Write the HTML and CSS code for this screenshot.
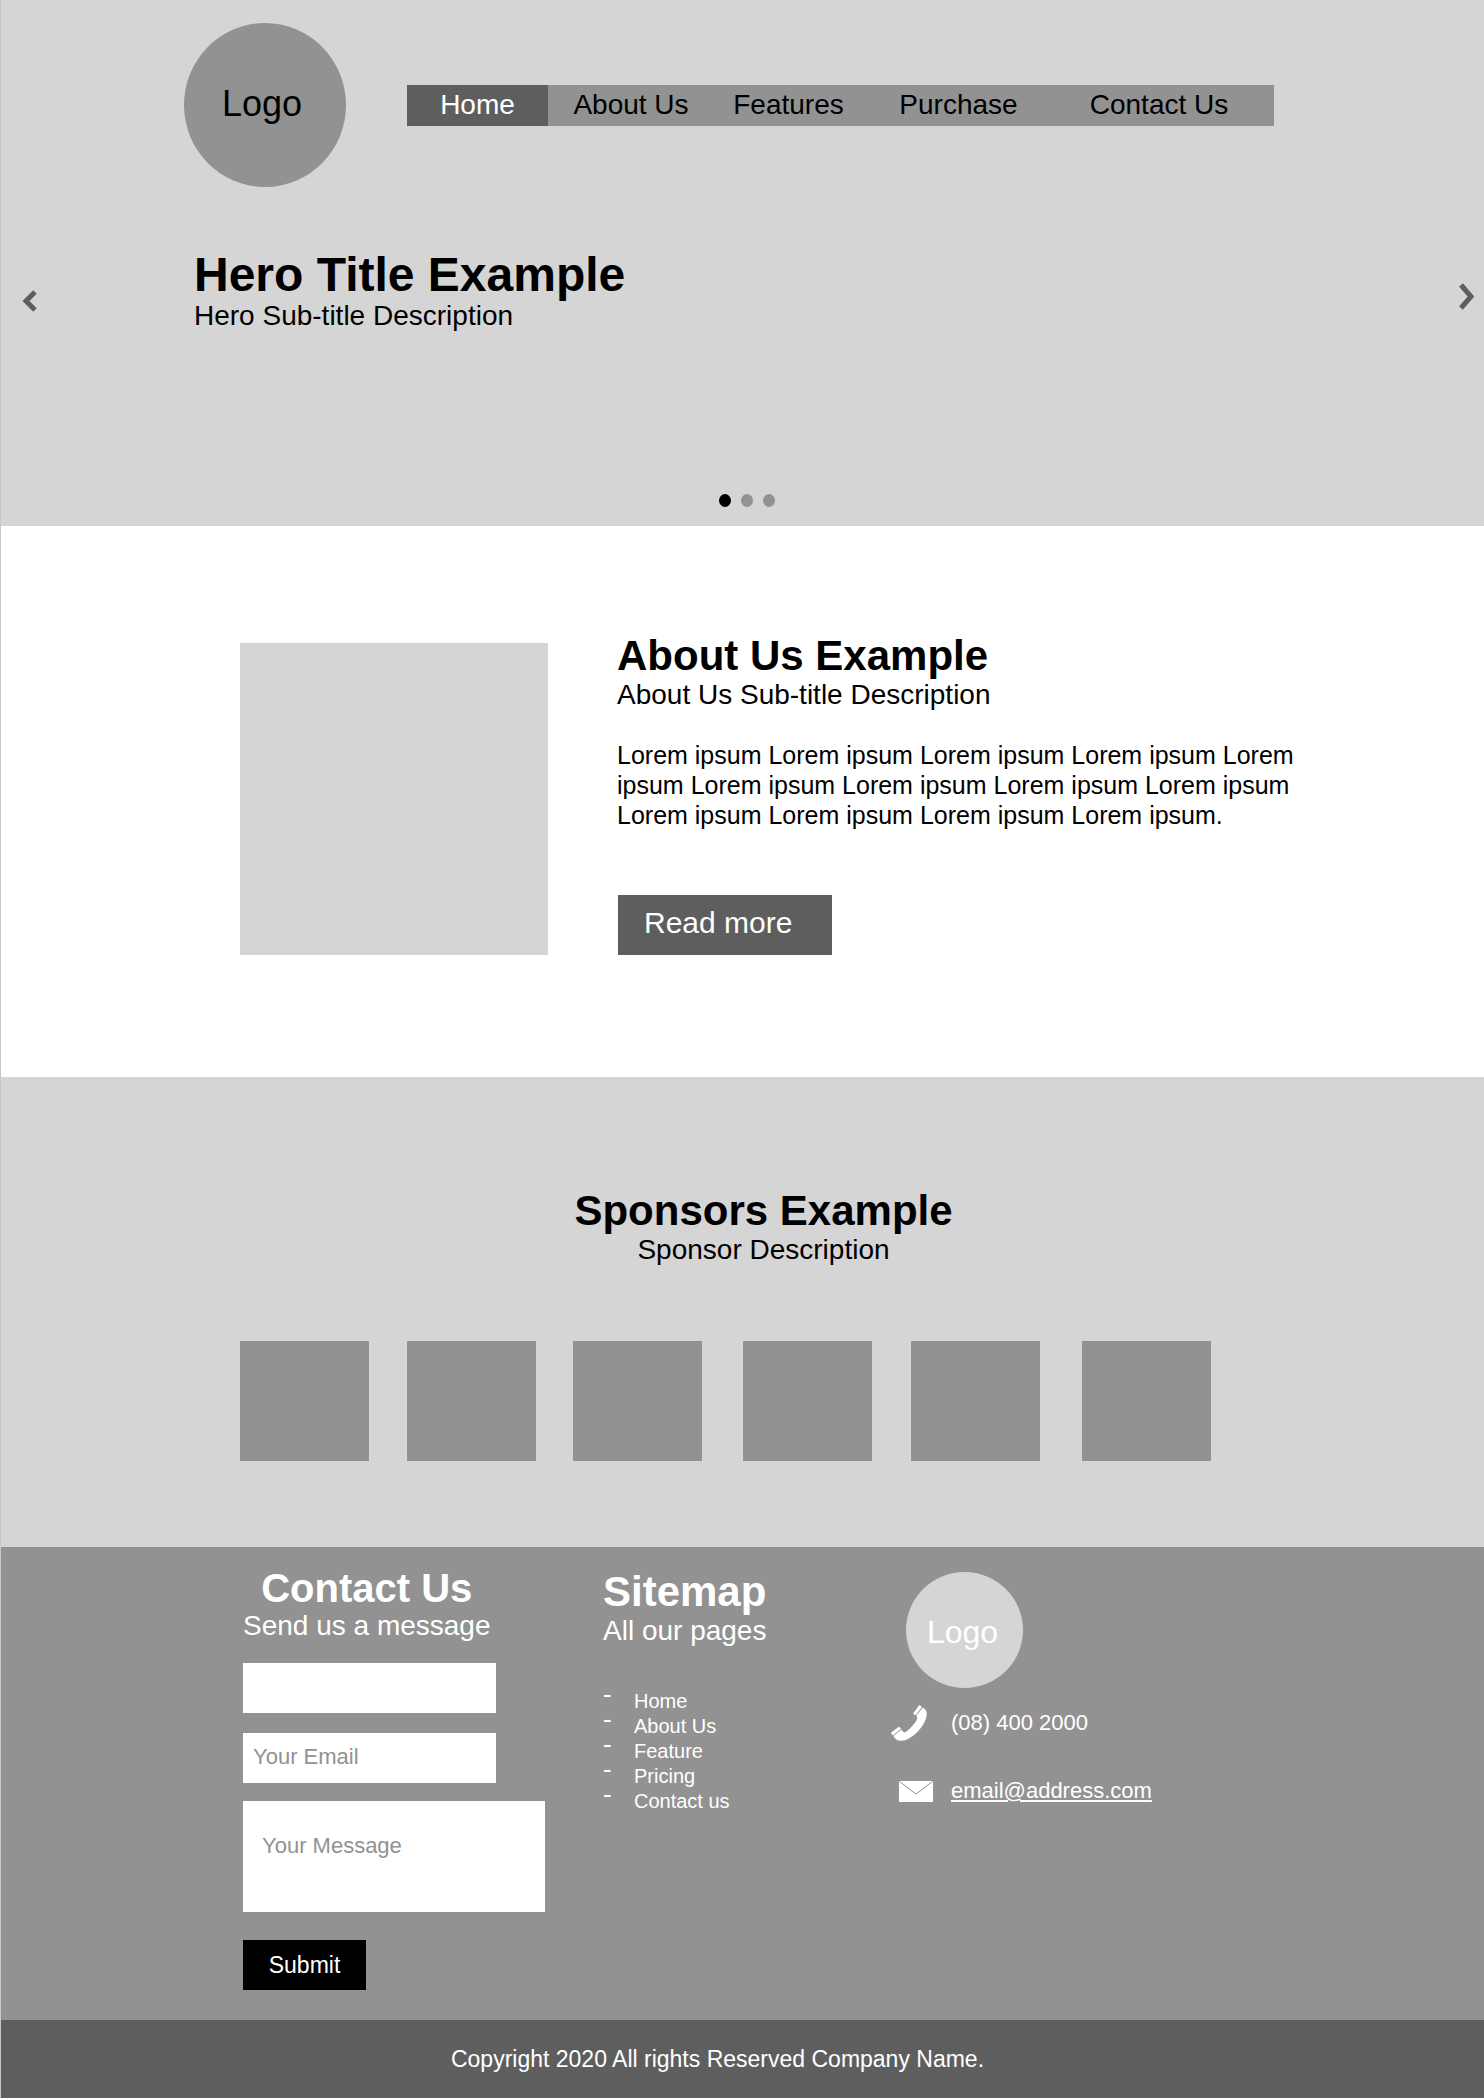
FILE: index.html
```html
<!DOCTYPE html>
<html lang="en">
<head>
<meta charset="utf-8">
<meta name="viewport" content="width=device-width, initial-scale=1">
<title>Company Name</title>
<link rel="stylesheet" href="styles.css">
</head>
<body>
<div class="top" id="home">
  <header class="header">
    <a class="logo" href="#home">Logo</a>
    <nav class="nav" aria-label="Main">
      <a class="nav-link nav-link-active" href="#home" aria-current="page">Home</a>
      <a class="nav-link" href="#about">About Us</a>
      <a class="nav-link" href="#features">Features</a>
      <a class="nav-link" href="#purchase">Purchase</a>
      <a class="nav-link" href="#contact">Contact Us</a>
    </nav>
  </header>
  <section class="hero">
    <button class="arrow" type="button" aria-label="Previous slide">
      <svg width="18" height="30" viewBox="0 0 18 30" aria-hidden="true"><path d="M14 10 5 19l9 9" fill="none" stroke="#5e5e5e" stroke-width="5"/></svg>
    </button>
    <div class="hero-text">
      <h1 class="hero-title">Hero Title Example</h1>
      <p class="subtitle">Hero Sub-title Description</p>
    </div>
    <button class="arrow" type="button" aria-label="Next slide">
      <svg width="18" height="30" viewBox="0 0 18 30" aria-hidden="true"><path d="M3 3l10 11.500L3 26" fill="none" stroke="#5e5e5e" stroke-width="5"/></svg>
    </button>
  </section>
  <div class="dots">
    <button class="dot dot-active" type="button" aria-label="Slide 1"></button>
    <button class="dot" type="button" aria-label="Slide 2"></button>
    <button class="dot" type="button" aria-label="Slide 3"></button>
  </div>
</div>

<section class="about" id="about">
  <div class="about-image"></div>
  <div>
    <h2 class="title">About Us Example</h2>
    <p class="subtitle">About Us Sub-title Description</p>
    <p class="about-text">Lorem ipsum Lorem ipsum Lorem ipsum Lorem ipsum Lorem ipsum Lorem ipsum Lorem ipsum Lorem ipsum Lorem ipsum Lorem ipsum Lorem ipsum Lorem ipsum Lorem ipsum.</p>
    <button class="read-more" type="button">Read more</button>
  </div>
</section>

<section class="sponsors">
  <div class="sponsors-head">
    <h2 class="title">Sponsors Example</h2>
    <p class="subtitle">Sponsor Description</p>
  </div>
  <div class="sponsor-list">
    <div class="sponsor"></div>
    <div class="sponsor"></div>
    <div class="sponsor"></div>
    <div class="sponsor"></div>
    <div class="sponsor"></div>
    <div class="sponsor"></div>
  </div>
</section>

<footer>
  <div class="footer">
    <form class="contact" id="contact">
      <div class="contact-head">
        <h2 class="contact-title">Contact Us</h2>
        <p class="subtitle">Send us a message</p>
      </div>
      <input class="field" type="text" aria-label="Your Name">
      <input class="field" type="email" aria-label="Your Email" placeholder="Your Email">
      <textarea class="message" aria-label="Your Message" placeholder="Your Message"></textarea>
      <button class="submit" type="submit">Submit</button>
    </form>
    <div class="sitemap">
      <h2 class="title">Sitemap</h2>
      <p class="subtitle">All our pages</p>
      <ul class="sitemap-list">
        <li><a href="#home">Home</a></li>
        <li><a href="#about">About Us</a></li>
        <li><a href="#features">Feature</a></li>
        <li><a href="#purchase">Pricing</a></li>
        <li><a href="#contact">Contact us</a></li>
      </ul>
    </div>
    <div class="reach">
      <a class="logo logo-small" href="#home">Logo</a>
      <div class="reach-row">
        <svg width="36" height="36" viewBox="0 0 36 36" aria-hidden="true" fill="#fff">
          <path d="M22.300 8.200 28 .6q.5-.6 1.100-.1l1.800 1.500-6.300 8.300-2.100-1.200q-.6-.4-.2-.9z"/>
          <path d="M31.800 2.600q3.900 2 3.900 6.400c0 6.500-5.200 14-10.200 18.800-5 4.700-10.500 8-15.500 8-3.700 0-6-1.800-7.700-4.800l8.300-6.200 1.500 2q.9 1.100 2.400.2c4-2.500 8.500-7.400 11.400-12.500q.9-1.700-.3-2.900l-.4-.8z"/>
          <path d="M.3 27.600 7.500 21.900q.6-.5 1.100 0l1.500 2.200-8.300 6.300L.2 28.500q-.3-.5.1-.9z"/>
        </svg>
        <span>(08) 400 2000</span>
      </div>
      <div class="reach-row">
        <svg class="mail-icon" width="34" height="21" viewBox="0 0 34 21" aria-hidden="true"><path d="M0 0h34v21H0z" fill="#fff"/><path d="M.5.5 17 13 33.500.5" fill="none" stroke="#929292"/></svg>
        <a class="mail" href="mailto:email@address.com">email@address.com</a>
      </div>
    </div>
  </div>
  <p class="copyright">Copyright 2020 All rights Reserved Company Name.</p>
</footer>
</body>
</html>
```
FILE: styles.css
```css
*, *::before, *::after {
  box-sizing: border-box;
}

body {
  margin: 0;
  border-left: 1px solid #c8c8c8;
  background: #fff;
  color: #000;
  font-family: "Liberation Sans", Arial, Helvetica, sans-serif;
  font-size: 22px;
}

h1, h2, p, ul {
  margin: 0;
  padding: 0;
}

a {
  color: inherit;
  text-decoration: none;
}

button, input, textarea {
  border: 0;
  border-radius: 0;
  padding: 0;
  font: inherit;
}

svg {
  display: block;
}

.title {
  font-size: 42px;
  line-height: 48px;
}

.subtitle {
  font-size: 28px;
  line-height: 30px;
}

/* Header and hero */

.top {
  padding: 23px 0 19px;
  background: #d5d5d5;
}

.header {
  display: flex;
  align-items: center;
  gap: 61px;
  padding: 0 210px 0 183px;
}

.logo {
  display: flex;
  flex: none;
  align-items: center;
  justify-content: center;
  width: 162px;
  height: 164px;
  padding: 0 6px 3px 0;
  border-radius: 50%;
  background: #929292;
  font-size: 36px;
}

.nav {
  display: grid;
  flex: 1;
  grid-template-columns: 141fr 166fr 149fr 191fr 210fr;
  padding-right: 10px;
  background: #929292;
}

.nav-link {
  padding-bottom: 1px;
  font-size: 28px;
  line-height: 40px;
  text-align: center;
}

.nav-link-active {
  background: #5e5e5e;
  color: #fff;
}

.hero {
  display: flex;
  align-items: center;
  min-height: 96px;
  margin-top: 62px;
  padding: 0 8px 0 20px;
}

.hero-text {
  flex: 1;
  align-self: flex-start;
  padding-left: 155px;
}

.hero-title {
  font-size: 48px;
  line-height: 52px;
}

.arrow {
  background: none;
}

.dots {
  display: flex;
  justify-content: center;
  gap: 10px;
  margin-top: 149px;
  padding-left: 9px;
}

.dot {
  width: 12px;
  height: 13px;
  border-radius: 50%;
  background: #929292;
}

.dot-active {
  background: #000;
}

/* About */

.about {
  display: grid;
  grid-template-columns: 308px 1fr;
  gap: 69px;
  align-items: end;
  padding: 106px 167px 122px 239px;
}

.about-image {
  height: 312px;
  background: #d5d5d5;
}

.about-text {
  margin: 30px 0 65px;
  font-size: 25px;
  line-height: 30px;
}

.read-more {
  display: block;
  width: 214px;
  height: 60px;
  margin-left: 1px;
  padding: 0 0 5px 26px;
  background: #5e5e5e;
  color: #fff;
  font-size: 30px;
  text-align: left;
}

/* Sponsors */

.sponsors {
  padding: 110px 0 86px;
  background: #d5d5d5;
}

.sponsors-head {
  padding-left: 42px;
  text-align: center;
}

.sponsor-list {
  display: grid;
  grid-template-columns: 167fr 166fr 170fr 168fr 171fr 130fr;
  margin-top: 76px;
  padding: 0 272px 0 239px;
}

.sponsor {
  width: 129px;
  height: 120px;
  background: #929292;
}

/* Footer */

.footer {
  display: grid;
  grid-template-columns: 360px 288px 1fr;
  padding: 18px 272px 30px 242px;
  background: #929292;
  color: #fff;
}

.contact {
  display: flex;
  flex-direction: column;
  align-items: flex-start;
}

.contact-head {
  margin-bottom: 22px;
  text-align: center;
}

.contact-title {
  font-size: 40px;
  line-height: 46px;
}

.field {
  width: 253px;
  height: 50px;
  margin-bottom: 20px;
  padding: 0 10px 3px;
  background: #fff;
}

.message {
  width: 302px;
  height: 111px;
  margin-bottom: 28px;
  padding: 32px 19px 0;
  background: #fff;
  line-height: 26px;
  resize: none;
}

.field + .message {
  margin-top: -2px;
}

.field::placeholder, .message::placeholder {
  color: #929292;
}

.submit {
  width: 123px;
  height: 50px;
  background: #000;
  color: #fff;
  font-size: 23px;
}

.sitemap {
  padding-top: 3px;
}

.sitemap-list {
  margin-top: 43px;
  font-size: 20px;
  line-height: 25px;
  list-style: none;
}

.sitemap-list li {
  display: grid;
  grid-template-columns: 31px 1fr;
}

.sitemap-list li::before {
  content: "-";
  font-size: 26px;
  line-height: 10px;
}

.reach {
  padding-top: 7px;
}

.logo-small {
  width: 117px;
  height: 116px;
  margin: 0 0 17px 15px;
  padding: 4px 4px 0 0;
  background: #d5d5d5;
  font-size: 32px;
}

.reach-row {
  display: grid;
  grid-template-columns: 60px 1fr;
  align-items: center;
  margin-bottom: 32px;
  line-height: 36px;
}

.mail-icon {
  margin-left: 8px;
}

.mail {
  text-decoration: underline;
}

.copyright {
  padding: 24px 50px 24px 0;
  background: #5e5e5e;
  color: #fff;
  font-size: 23px;
  line-height: 30px;
  text-align: center;
}
```
